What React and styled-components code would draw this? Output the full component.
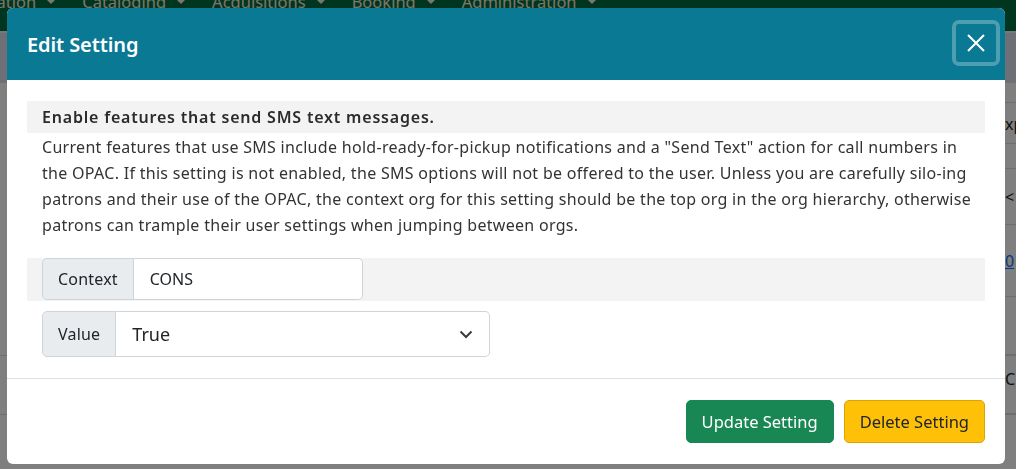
import React from 'react';
import styled, { createGlobalStyle } from 'styled-components';

const GlobalStyle = createGlobalStyle`
  html, body {
    margin: 0;
    padding: 0;
    width: 1016px;
    height: 469px;
    overflow: hidden;
    font-family: "Noto Sans", "Open Sans", sans-serif;
  }
`;

// ----- page behind the modal -----
const Page = styled.div`
  width: 1016px;
  height: 469px;
  background: #ffffff;
  display: flex;
  flex-direction: column;
`;

const NavBar = styled.div`
  height: 31px;
  background: #006a40;
  display: flex;
  align-items: flex-end;
  overflow: hidden;
  flex-shrink: 0;
`;

const NavItems = styled.div`
  display: flex;
  gap: 27px;
  margin-left: -47px;
  margin-bottom: 19px;
  font-size: 16.5px;
  color: #f6eed2;
  line-height: 20px;
  white-space: nowrap;
`;

const NavItem = styled.span`
  display: flex;
  align-items: center;
  gap: 11px;
  &::after {
    content: '';
    border-left: 4px solid transparent;
    border-right: 4px solid transparent;
    border-top: 4px solid #f6eed2;
  }
`;

const GapBand = styled.div`
  height: 2px;
  background: #f0f0f0;
  flex-shrink: 0;
`;

const SubBar = styled.div`
  height: 50px;
  background: #dbe2ee;
  flex-shrink: 0;
`;

const BgRow = styled.div`
  height: ${p => p.h}px;
  border-bottom: 1px solid ${p => (p.full ? '#dddddd' : 'transparent')};
  display: flex;
  justify-content: flex-end;
  flex-shrink: 0;
`;

const BgCell = styled.div`
  width: 11px;
  height: 100%;
  border-bottom: 1px solid #dddddd;
  display: flex;
  align-items: ${p => (p.top ? 'flex-start' : 'center')};
  padding-top: ${p => (p.top ? 12 : 0)}px;
  overflow: hidden;
  font-size: 16px;
  color: #222;
  white-space: nowrap;
  box-sizing: border-box;
`;

const BgLink = styled.span`
  color: #0d6efd;
  text-decoration: underline;
`;

// ----- modal -----
const Overlay = styled.div`
  position: fixed;
  inset: 0;
  background: rgba(0, 0, 0, 0.5);
  display: flex;
  align-items: flex-start;
  justify-content: flex-start;
  padding: 8px 0 0 7px;
`;

const Modal = styled.div`
  width: 998px;
  background: #ffffff;
  border-radius: 6px;
  overflow: hidden;
  display: flex;
  flex-direction: column;
`;

const Header = styled.div`
  height: 72px;
  background: #0a7994;
  display: flex;
  align-items: center;
  justify-content: space-between;
  padding: 0 5px 0 20px;
  box-sizing: border-box;
`;

const Title = styled.h5`
  margin: 0;
  color: #ffffff;
  font-size: 20px;
  font-weight: 600;
  letter-spacing: -0.1px;
`;

const CloseButton = styled.button`
  width: 48px;
  height: 46px;
  border: 4px solid rgba(255, 255, 255, 0.28);
  border-radius: 7px;
  background: transparent;
  display: flex;
  align-items: center;
  justify-content: center;
  padding: 0;
  margin-top: -2px;
  cursor: pointer;
`;

const Body = styled.div`
  padding: 21px 20px;
  display: flex;
  flex-direction: column;
`;

const Strip = styled.div`
  background: #f3f3f3;
  padding: 0 15px;
  height: ${p => p.h}px;
  display: flex;
  align-items: ${p => (p.top ? 'flex-start' : 'center')};
`;

const StripTitle = styled.div`
  font-size: 16px;
  font-weight: 600;
  letter-spacing: 0.8px;
  color: #2b2b2b;
  line-height: 32px;
`;

const Description = styled.p`
  margin: 0 0 20px 0;
  padding: 1px 15px 0;
  font-size: 16px;
  letter-spacing: 0.3px;
  line-height: 26px;
  color: #333333;
`;

const Line = styled.span`
  display: block;
  white-space: nowrap;
`;

const InputGroup = styled.div`
  display: flex;
  height: ${p => p.h}px;
  width: ${p => p.w}px;
  margin-top: ${p => p.mt || 0}px;
  margin-left: ${p => p.ml || 0}px;
`;

const Addon = styled.span`
  display: flex;
  align-items: center;
  padding: 0 15px;
  background: #e9ecef;
  border: 1px solid #ced4da;
  border-radius: 5px 0 0 5px;
  font-size: 16px;
  letter-spacing: 0.2px;
  color: #212529;
  box-sizing: border-box;
`;

const TextInput = styled.div`
  flex: 1;
  display: flex;
  align-items: center;
  padding: 0 16px;
  background: #ffffff;
  border: 1px solid #ced4da;
  border-left: none;
  border-radius: 0 5px 5px 0;
  font-size: ${p => p.fs || 16}px;
  color: #212529;
  justify-content: space-between;
`;

const Footer = styled.div`
  border-top: 1px solid #dee2e6;
  height: 85px;
  display: flex;
  align-items: center;
  justify-content: flex-end;
  padding: 0 20px 0 0;
  gap: 10px;
`;

const Button = styled.button`
  height: 43px;
  padding: 0 15px;
  border-radius: 5px;
  font-family: inherit;
  font-size: 16.5px;
  cursor: pointer;
  background: ${p => (p.warning ? '#ffc107' : '#198754')};
  border: 1px solid ${p => (p.warning ? '#d9a406' : '#198754')};
  color: ${p => (p.warning ? '#212529' : '#ffffff')};
`;

const bgRows = [
  { h: 20 },
  { h: 40, text: 'xp' },
  { h: 24 },
  { h: 55, text: '<' },
  { h: 71, link: true },
  { h: 57, full: true },
  { h: 58, full: true, text: 'C', top: true },
  { h: 60, full: true },
];

const descLines = [
  'Current features that use SMS include hold-ready-for-pickup notifications and a "Send Text" action for call numbers in',
  'the OPAC. If this setting is not enabled, the SMS options will not be offered to the user. Unless you are carefully silo-ing',
  'patrons and their use of the OPAC, the context org for this setting should be the top org in the org hierarchy, otherwise',
  'patrons can trample their user settings when jumping between orgs.',
];

export default function App() {
  return (
    <>
      <GlobalStyle />
      <Page>
        <NavBar>
          <NavItems>
            <NavItem>Circulation</NavItem>
            <NavItem>Cataloging</NavItem>
            <NavItem>Acquisitions</NavItem>
            <NavItem>Booking</NavItem>
            <NavItem>Administration</NavItem>
          </NavItems>
        </NavBar>
        <GapBand />
        <SubBar />
        {bgRows.map((r, i) => (
          <BgRow key={i} h={r.h} full={r.full}>
            <BgCell top={r.top}>
              {r.link ? <BgLink>0</BgLink> : r.text}
            </BgCell>
          </BgRow>
        ))}
      </Page>

      <Overlay>
        <Modal>
          <Header>
            <Title>Edit Setting</Title>
            <CloseButton aria-label="Close">
              <svg width="20" height="20" viewBox="0 0 20 20">
                <path d="M2 2 L18 18 M18 2 L2 18" stroke="#ffffff" strokeWidth="2" fill="none" />
              </svg>
            </CloseButton>
          </Header>
          <Body>
            <Strip h={32}>
              <StripTitle>Enable features that send SMS text messages.</StripTitle>
            </Strip>
            <Description>
              {descLines.map((l, i) => (
                <Line key={i}>{l}</Line>
              ))}
            </Description>
            <Strip h={43} top>
              <InputGroup h={42} w={321}>
                <Addon>Context</Addon>
                <TextInput>CONS</TextInput>
              </InputGroup>
            </Strip>
            <InputGroup h={46} w={448} mt={10} ml={15}>
              <Addon>Value</Addon>
              <TextInput fs={18}>
                True
                <svg width="14" height="9" viewBox="0 0 14 9">
                  <path d="M1.5 1.5 L7 7 L12.5 1.5" stroke="#343a40" strokeWidth="2" fill="none" />
                </svg>
              </TextInput>
            </InputGroup>
          </Body>
          <Footer>
            <Button>Update Setting</Button>
            <Button warning>Delete Setting</Button>
          </Footer>
        </Modal>
      </Overlay>
    </>
  );
}
